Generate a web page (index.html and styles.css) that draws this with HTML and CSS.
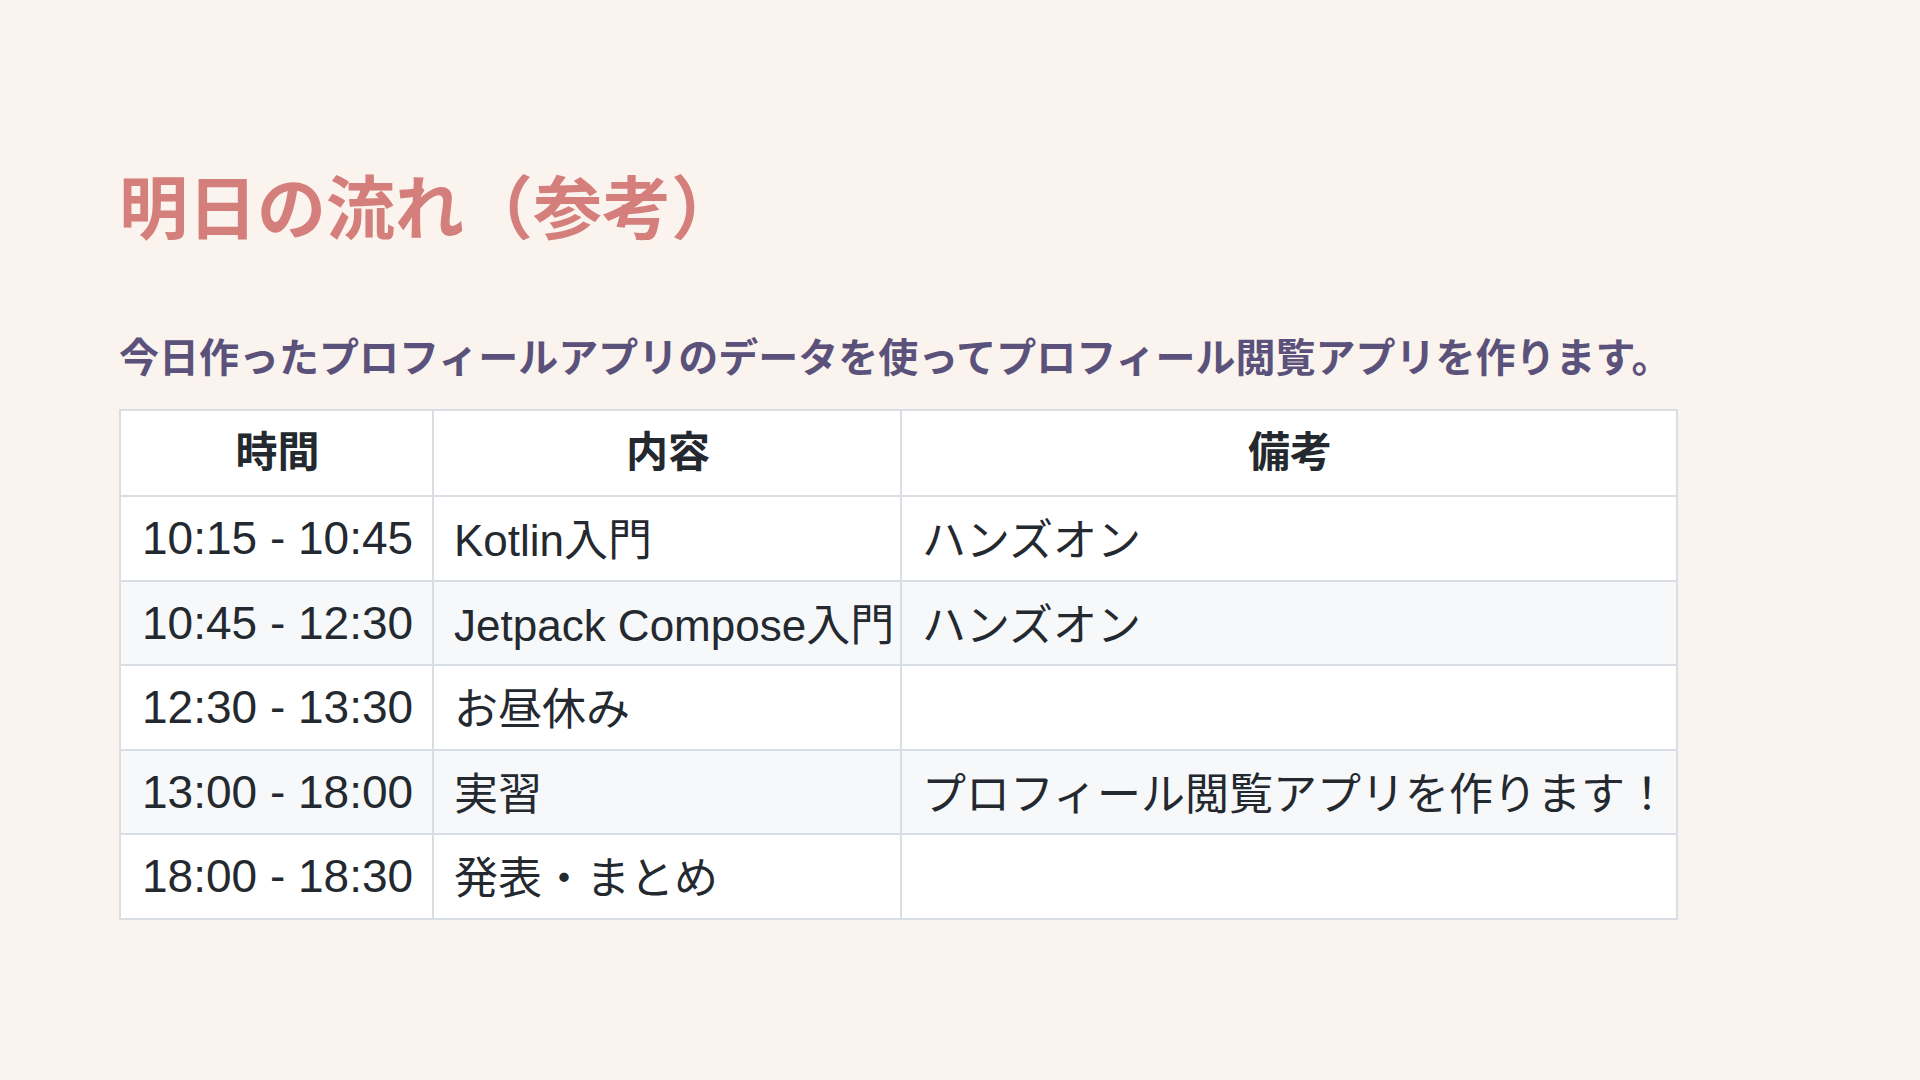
FILE: index.html
```html
<!DOCTYPE html>
<html lang="ja">
<head>
<meta charset="utf-8">
<link rel="stylesheet" href="styles.css">
</head>
<body>
<section class="slide">
  <h1 class="title">明日の流れ（参考）</h1>
  <p class="lead">今日作ったプロフィールアプリのデータを使ってプロフィール閲覧アプリを作ります。</p>
  <table class="schedule">
    <colgroup>
      <col class="c-time"><col class="c-what"><col class="c-note">
    </colgroup>
    <thead>
      <tr><th>時間</th><th>内容</th><th>備考</th></tr>
    </thead>
    <tbody>
      <tr><td class="time">10:15 - 10:45</td><td>Kotlin入門</td><td>ハンズオン</td></tr>
      <tr><td class="time">10:45 - 12:30</td><td>Jetpack Compose入門</td><td>ハンズオン</td></tr>
      <tr><td class="time">12:30 - 13:30</td><td>お昼休み</td><td></td></tr>
      <tr><td class="time">13:00 - 18:00</td><td>実習</td><td>プロフィール閲覧アプリを作ります！</td></tr>
      <tr><td class="time">18:00 - 18:30</td><td>発表・まとめ</td><td></td></tr>
    </tbody>
  </table>
</section>
</body>
</html>
```
FILE: styles.css
```css
html, body {
  margin: 0;
  padding: 0;
}
body {
  background: #fbf3ed;
  font-family: "Liberation Sans", "Noto Sans CJK JP", sans-serif;
}
.slide {
  width: 1920px;
  height: 1080px;
  box-sizing: border-box;
  padding: 160px 119px 0 119px;
}
.title {
  margin: 0;
  font-family: "Noto Sans CJK JP", sans-serif;
  font-weight: 700;
  font-size: 69px;
  line-height: 88px;
  color: #d47f7b;
}
.lead {
  margin: 81px 0 0 0;
  font-family: "Noto Sans CJK JP", sans-serif;
  font-weight: 700;
  font-size: 40px;
  line-height: 52px;
  color: #5b527c;
}
.schedule {
  margin-top: 28px;
  width: 1557px;
  table-layout: fixed;
  border-collapse: collapse;
  background: #ffffff;
  color: #24292f;
  font-size: 44px;
}
.c-time { width: 313px; }
.c-what { width: 468px; }
.c-note { width: 776px; }
.schedule th, .schedule td {
  border: 2px solid #d9dee4;
  box-sizing: border-box;
  padding: 0 18px 2px 20px;
  text-align: left;
  vertical-align: middle;
  white-space: nowrap;
  overflow: visible;
}
.schedule th {
  height: 86px;
  padding-bottom: 9px;
  font-family: "Noto Sans CJK JP", sans-serif;
  font-weight: 700;
  text-align: center;
  font-size: 42px;
}
.schedule td {
  height: 84.5px;
}
.schedule td.time {
  font-size: 46px;
  padding-left: 21px;
  padding-bottom: 0;
}
.schedule tbody tr:nth-child(even) td {
  background: #f6f8fa;
}
```
